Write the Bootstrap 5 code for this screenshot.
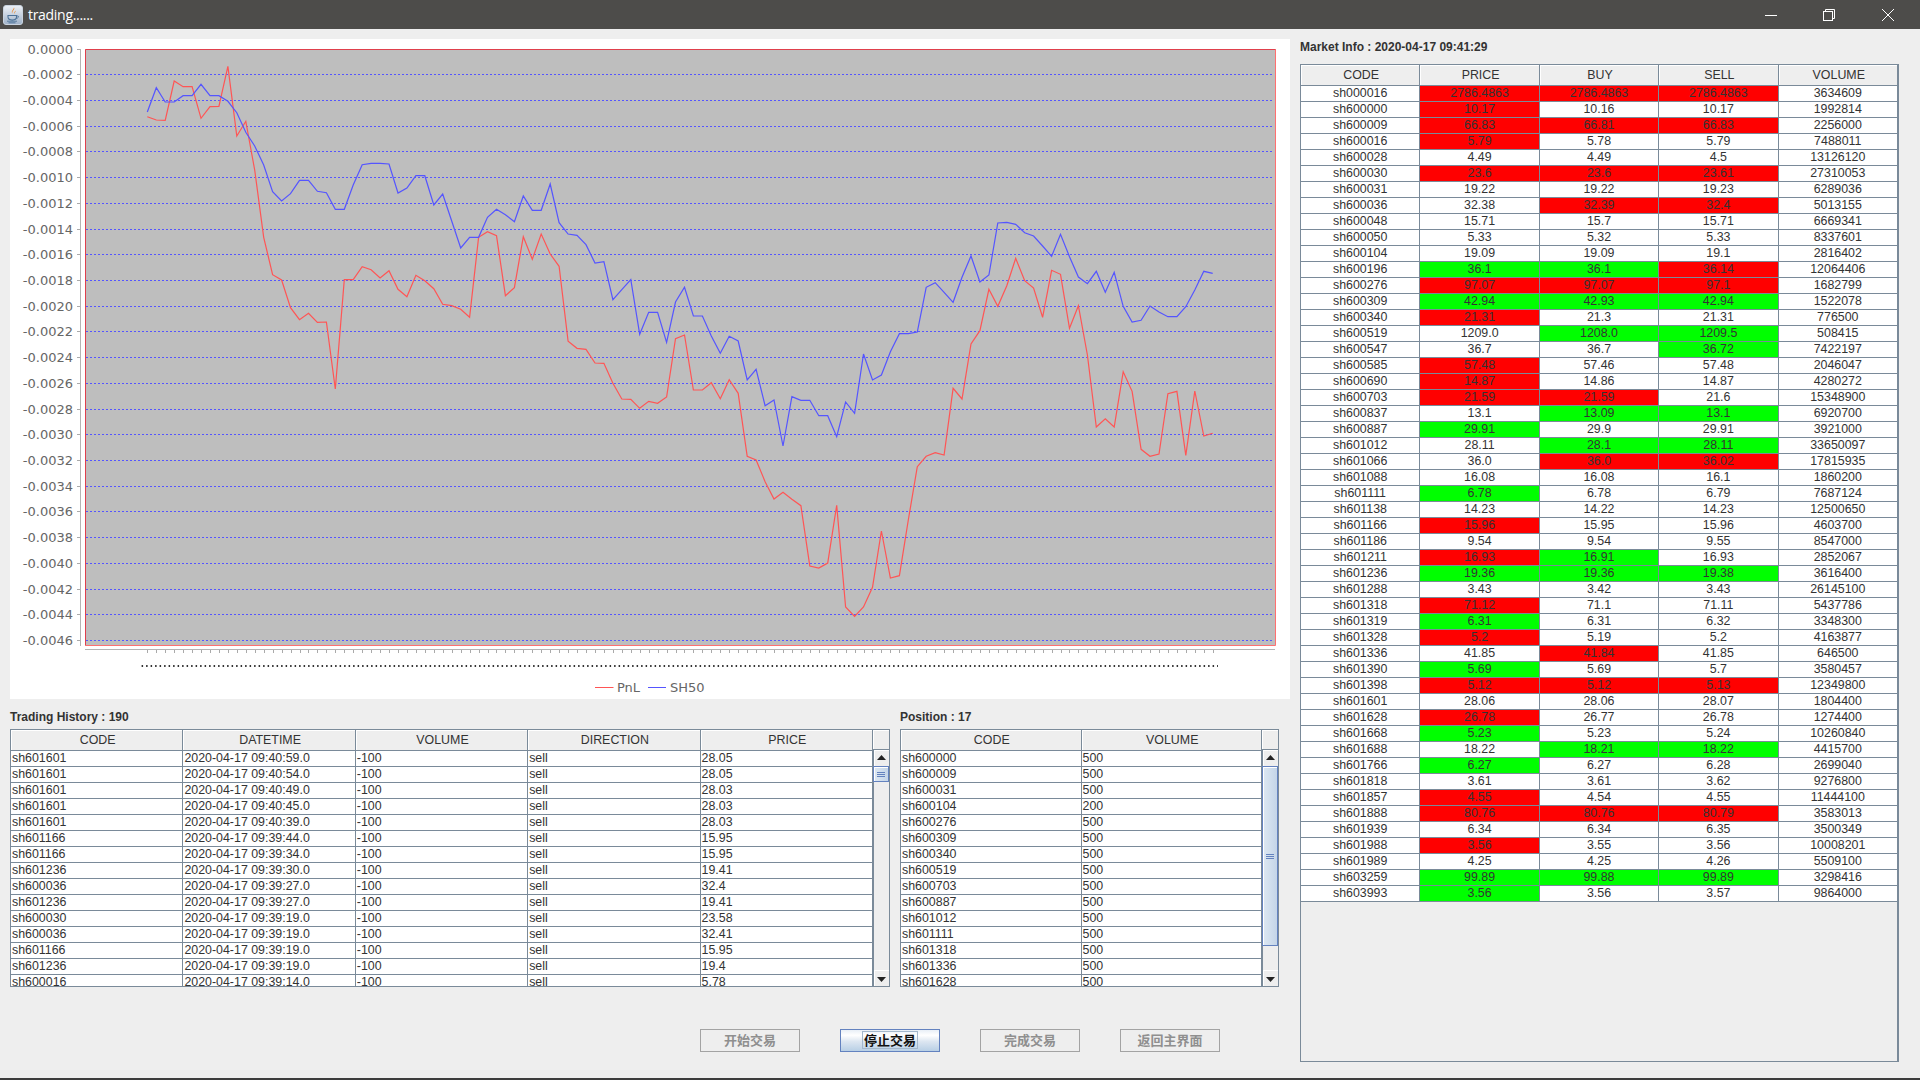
<!DOCTYPE html>
<html lang="zh">
<head>
  <meta charset="UTF-8">
  <title>trading......</title>
  <link href="https://cdn.jsdelivr.net/npm/bootstrap@5.3.3/dist/css/bootstrap.min.css" rel="stylesheet">
  <style>
    body { background: #eeeeee; overflow: hidden; font-family: "Liberation Sans", Arial, sans-serif; color: #333333; }
    .app-window { width: 1920px; height: 1080px; border-bottom: 2px solid #3c3c3c; }
    .title-strip { height: 29px; background: #4d4c4a; color: #fff; font-family: "Open Sans", "Noto Sans", sans-serif; font-size: 14px; letter-spacing: -.3px; }
    .title-icon { margin-left: 3px; margin-right: 5px; }
    .win-btn { width: 58.5px; height: 29px; }
    .win-btns { margin-right: 3px; }

    .left-side { width: 1280px; margin-left: 10px; }
    .chart-panel { height: 660px; margin-top: 10px; background: #fff; }
    .chart-panel svg { display: block; }
    .chart-panel text { font-family: "DejaVu Sans", sans-serif; font-size: 13px; fill: #666; }

    .pane-label { height: 20px; line-height: 20px; font-size: 12px; font-weight: bold; color: #333; }
    .label-row { margin-top: 8px; margin-bottom: 2px; }
    .history-label { width: 890px; flex-shrink: 0; }
    .market-label { margin-top: 8px; height: 27px; line-height: 20px; }

    .grid-pane { border: 1px solid #7a8a99; height: 258px; overflow: hidden; background: #eee; }
    .history-pane { width: 880px; margin-right: 10px; }
    .position-pane { width: 379px; }
    .market-pane { width: 599px; height: 998px; border-right-width: 2px; }

    .swing-grid { table-layout: fixed; border-collapse: separate; border-spacing: 0; margin: 0; font-size: 12.4px; width: auto; }
    .swing-grid th, .swing-grid td { padding: 0; overflow: hidden; white-space: nowrap; color: #333; border-style: solid; border-color: #7a8a99; border-width: 0 1px 1px 0; }
    .swing-grid th { height: 20px; line-height: 19px; padding: 1px 0 0 2px; background: #eeeeee; font-weight: normal; text-align: center; box-shadow: inset 1px 1px 0 #fff; }
    .swing-grid td { height: 16px; line-height: 15px; padding-left: 1px; background: #fff; }
    .market-grid td { text-align: center; padding-left: 0; }
    .swing-grid td.up-cell { background: #ff0000; }
    .swing-grid td.down-cell { background: #00ff00; }
    .history-grid { width: 862px; }
    .history-grid col { width: 172.4px; }
    .position-grid { width: 361px; }
    .position-grid col { width: 180.5px; }
    .market-grid { width: 597px; }
    .market-grid col { width: 119.4px; }

    .fake-scroll { width: 16px; height: 256px; background: #eee; }
    .scroll-head { height: 20px; border-bottom: 1px solid #7a8a99; box-shadow: inset 1px 1px 0 #fff; }
    .scroll-arrow { height: 16px; background: #eee; box-shadow: inset 1px 1px 0 #fff; border-left: 1px solid #7a8a99; }
    .arrow-up { padding-bottom: 1px; }
    .arrow-down { padding-top: 3px; }
    .scroll-rest { border-left: 1px solid #7a8a99; }
    .scroll-thumb { background: linear-gradient(90deg, #dde8f3, #c4d5e8); border: 1px solid #6382bf; box-shadow: inset 1px 1px 0 #fff; }
    .thumb-small { height: 16px; }
    .thumb-big { height: 180px; }
    .grip { width: 8px; height: 5px; border-top: 1px solid #6382bf; border-bottom: 1px solid #6382bf; background: linear-gradient(#6382bf, #6382bf) center / 100% 1px no-repeat; }

    .action-row { margin-top: 42px; margin-left: 690px; gap: 40px; }
    .action-btn {
      width: 100px; height: 23px; padding: 0 0 2px; border-radius: 0; font-family: "Noto Sans CJK SC", sans-serif; font-size: 13px; font-weight: bold; line-height: 1;
      --bs-btn-disabled-color: #8f8f8f; --bs-btn-disabled-bg: #eeeeee; --bs-btn-disabled-border-color: #a3a3a3; --bs-btn-disabled-opacity: 1;
    }
    .action-btn.live-btn { color: #111; border: 1px solid #6382bf; background: linear-gradient(#e8eff7 0%, #ffffff 25%, #dce6f1 55%, #b8cfe5 100%); }
    .focus-box { display: inline-block; padding: 1px 1px; border: 1px solid #a3b8cc; line-height: 14px; }

    .right-side { width: 599px; margin-left: 10px; }
  </style>
</head>
<body>
  <div class="app-window d-flex flex-column">

    <!-- title bar -->
    <div class="title-strip d-flex align-items-center">
      <svg class="title-icon" width="20" height="20" viewBox="0 0 20 20">
        <defs><linearGradient id="ic" x1="0" y1="0" x2="0" y2="1"><stop offset="0" stop-color="#eef2f7"/><stop offset="1" stop-color="#9fb2c9"/></linearGradient></defs>
        <rect x="0.5" y="0.5" width="19" height="19" rx="2.5" fill="url(#ic)" stroke="#c9d3df"/>
        <path d="M11 2.5c1.5 2-2.5 3.5-1.5 6 -2-2 .8-3.5 1.5-6zM12.6 5.5c.5 1.4-1.5 2-.9 3.4 -1.4-1.2.3-2.2.9-3.4z" fill="#e8872c"/>
        <path d="M5 10.5h8.5v1.6c0 2-1.6 3-4.2 3s-4.3-1-4.3-3z" fill="none" stroke="#4d7398" stroke-width="1.1"/>
        <path d="M13.5 11h1.4c1 0 1 2-1.6 2.4" fill="none" stroke="#4d7398" stroke-width=".9"/>
        <path d="M4 16.2h10M5.5 17.8h7" stroke="#4d7398" stroke-width=".9"/>
      </svg>
      <span>trading......</span>
      <div class="win-btns d-flex ms-auto">
        <div class="win-btn d-flex align-items-center justify-content-center">
          <svg width="12" height="12" viewBox="0 0 12 12"><path d="M0 6.5h12" stroke="#fff"/></svg>
        </div>
        <div class="win-btn d-flex align-items-center justify-content-center">
          <svg width="12" height="12" viewBox="0 0 12 12" fill="none" stroke="#fff"><rect x=".5" y="2.5" width="9" height="9"/><path d="M2.5 2.5v-2h9v9h-2"/></svg>
        </div>
        <div class="win-btn d-flex align-items-center justify-content-center">
          <svg width="12" height="12" viewBox="0 0 12 12"><path d="M0 0l12 12M12 0L0 12" stroke="#fff"/></svg>
        </div>
      </div>
    </div>

    <div class="d-flex flex-grow-1">
      <div class="left-side">
        <!-- pnl chart -->
        <div class="chart-panel">
          <svg id="chart" width="1280" height="660" viewBox="10 39 1280 660"></svg>
        </div>

        <div class="label-row d-flex">
          <div class="pane-label history-label">Trading History : 190</div>
          <div class="pane-label">Position : 17</div>
        </div>

        <div class="d-flex">
          <div class="grid-pane history-pane d-flex">
            <div class="flex-grow-1 overflow-hidden">
              <table class="table swing-grid history-grid">
                <colgroup><col><col><col><col><col></colgroup>
                <thead><tr><th>CODE</th><th>DATETIME</th><th>VOLUME</th><th>DIRECTION</th><th>PRICE</th></tr></thead>
                <tbody id="history-rows"></tbody>
              </table>
            </div>
            <div class="fake-scroll d-flex flex-column flex-shrink-0">
              <div class="scroll-head"></div>
              <div class="scroll-arrow arrow-up d-flex align-items-center justify-content-center"><svg width="9" height="5"><path d="M4.5 0L9 5H0z" fill="#222"/></svg></div>
              <div class="scroll-thumb thumb-small d-flex align-items-center justify-content-center"><div class="grip"></div></div>
              <div class="scroll-rest flex-grow-1"></div>
              <div class="scroll-arrow arrow-down d-flex align-items-center justify-content-center"><svg width="9" height="5"><path d="M4.5 5L9 0H0z" fill="#222"/></svg></div>
            </div>
          </div>

          <div class="grid-pane position-pane d-flex">
            <div class="flex-grow-1 overflow-hidden">
              <table class="table swing-grid position-grid">
                <colgroup><col><col></colgroup>
                <thead><tr><th>CODE</th><th>VOLUME</th></tr></thead>
                <tbody id="position-rows"></tbody>
              </table>
            </div>
            <div class="fake-scroll d-flex flex-column flex-shrink-0">
              <div class="scroll-head"></div>
              <div class="scroll-arrow arrow-up d-flex align-items-center justify-content-center"><svg width="9" height="5"><path d="M4.5 0L9 5H0z" fill="#222"/></svg></div>
              <div class="scroll-thumb thumb-big d-flex align-items-center justify-content-center"><div class="grip"></div></div>
              <div class="scroll-rest flex-grow-1"></div>
              <div class="scroll-arrow arrow-down d-flex align-items-center justify-content-center"><svg width="9" height="5"><path d="M4.5 5L9 0H0z" fill="#222"/></svg></div>
            </div>
          </div>
        </div>

        <div class="action-row d-flex">
          <button class="btn action-btn" disabled>开始交易</button>
          <button class="btn action-btn live-btn"><span class="focus-box">停止交易</span></button>
          <button class="btn action-btn" disabled>完成交易</button>
          <button class="btn action-btn" disabled>返回主界面</button>
        </div>
      </div>

      <div class="right-side">
        <div class="pane-label market-label">Market Info : 2020-04-17 09:41:29</div>
        <div class="grid-pane market-pane">
          <table class="table swing-grid market-grid">
            <colgroup><col><col><col><col><col></colgroup>
            <thead><tr><th>CODE</th><th>PRICE</th><th>BUY</th><th>SELL</th><th>VOLUME</th></tr></thead>
            <tbody id="market-rows"></tbody>
          </table>
        </div>
      </div>
    </div>
  </div>

  <script src="https://cdn.jsdelivr.net/npm/bootstrap@5.3.3/dist/js/bootstrap.bundle.min.js"></script>
  <script>
    // code, price, buy, sell, volume, colour flags for price/buy/sell
    const market = [
      ["sh000016","2786.4863","2786.4863","2786.4863","3634609","rrr"],
      ["sh600000","10.17","10.16","10.17","1992814","r--"],
      ["sh600009","66.83","66.81","66.83","2256000","rrr"],
      ["sh600016","5.79","5.78","5.79","7488011","r--"],
      ["sh600028","4.49","4.49","4.5","13126120","---"],
      ["sh600030","23.6","23.6","23.61","27310053","rrr"],
      ["sh600031","19.22","19.22","19.23","6289036","---"],
      ["sh600036","32.38","32.39","32.4","5013155","-rr"],
      ["sh600048","15.71","15.7","15.71","6669341","---"],
      ["sh600050","5.33","5.32","5.33","8337601","---"],
      ["sh600104","19.09","19.09","19.1","2816402","---"],
      ["sh600196","36.1","36.1","36.14","12064406","ggr"],
      ["sh600276","97.07","97.07","97.1","1682799","rrr"],
      ["sh600309","42.94","42.93","42.94","1522078","ggg"],
      ["sh600340","21.31","21.3","21.31","776500","r--"],
      ["sh600519","1209.0","1208.0","1209.5","508415","-gg"],
      ["sh600547","36.7","36.7","36.72","7422197","--g"],
      ["sh600585","57.48","57.46","57.48","2046047","r--"],
      ["sh600690","14.87","14.86","14.87","4280272","r--"],
      ["sh600703","21.59","21.59","21.6","15348900","rr-"],
      ["sh600837","13.1","13.09","13.1","6920700","-gg"],
      ["sh600887","29.91","29.9","29.91","3921000","g--"],
      ["sh601012","28.11","28.1","28.11","33650097","-gg"],
      ["sh601066","36.0","36.0","36.02","17815935","-rr"],
      ["sh601088","16.08","16.08","16.1","1860200","---"],
      ["sh601111","6.78","6.78","6.79","7687124","g--"],
      ["sh601138","14.23","14.22","14.23","12500650","---"],
      ["sh601166","15.96","15.95","15.96","4603700","r--"],
      ["sh601186","9.54","9.54","9.55","8547000","---"],
      ["sh601211","16.93","16.91","16.93","2852067","rg-"],
      ["sh601236","19.36","19.36","19.38","3616400","ggg"],
      ["sh601288","3.43","3.42","3.43","26145100","---"],
      ["sh601318","71.12","71.1","71.11","5437786","r--"],
      ["sh601319","6.31","6.31","6.32","3348300","g--"],
      ["sh601328","5.2","5.19","5.2","4163877","r--"],
      ["sh601336","41.85","41.84","41.85","646500","-r-"],
      ["sh601390","5.69","5.69","5.7","3580457","g--"],
      ["sh601398","5.12","5.12","5.13","12349800","rrr"],
      ["sh601601","28.06","28.06","28.07","1804400","---"],
      ["sh601628","26.78","26.77","26.78","1274400","r--"],
      ["sh601668","5.23","5.23","5.24","10260840","g--"],
      ["sh601688","18.22","18.21","18.22","4415700","-gg"],
      ["sh601766","6.27","6.27","6.28","2699040","g--"],
      ["sh601818","3.61","3.61","3.62","9276800","---"],
      ["sh601857","4.55","4.54","4.55","11444100","r--"],
      ["sh601888","80.76","80.76","80.79","3583013","rrr"],
      ["sh601939","6.34","6.34","6.35","3500349","---"],
      ["sh601988","3.56","3.55","3.56","10008201","r--"],
      ["sh601989","4.25","4.25","4.26","5509100","---"],
      ["sh603259","99.89","99.88","99.89","3298416","ggg"],
      ["sh603993","3.56","3.56","3.57","9864000","g--"]
    ];
    const flagClass = { r: "up-cell", g: "down-cell", "-": "" };
    document.getElementById("market-rows").innerHTML = market.map(m => `
      <tr><td>${m[0]}</td>
        <td class="${flagClass[m[5][0]]}">${m[1]}</td>
        <td class="${flagClass[m[5][1]]}">${m[2]}</td>
        <td class="${flagClass[m[5][2]]}">${m[3]}</td>
        <td>${m[4]}</td></tr>`).join("");

    const trades = [
      ["sh601601","09:40:59.0","28.05"],["sh601601","09:40:54.0","28.05"],["sh601601","09:40:49.0","28.03"],
      ["sh601601","09:40:45.0","28.03"],["sh601601","09:40:39.0","28.03"],["sh601166","09:39:44.0","15.95"],
      ["sh601166","09:39:34.0","15.95"],["sh601236","09:39:30.0","19.41"],["sh600036","09:39:27.0","32.4"],
      ["sh601236","09:39:27.0","19.41"],["sh600030","09:39:19.0","23.58"],["sh600036","09:39:19.0","32.41"],
      ["sh601166","09:39:19.0","15.95"],["sh601236","09:39:19.0","19.4"],["sh600016","09:39:14.0","5.78"]
    ];
    document.getElementById("history-rows").innerHTML = trades.map(h =>
      `<tr><td>${h[0]}</td><td>2020-04-17 ${h[1]}</td><td>-100</td><td>sell</td><td>${h[2]}</td></tr>`).join("");

    const position = [
      ["sh600000",500],["sh600009",500],["sh600031",500],["sh600104",200],["sh600276",500],
      ["sh600309",500],["sh600340",500],["sh600519",500],["sh600703",500],["sh600887",500],
      ["sh601012",500],["sh601111",500],["sh601318",500],["sh601336",500],["sh601628",500]
    ];
    document.getElementById("position-rows").innerHTML = position.map(p =>
      `<tr><td>${p[0]}</td><td>${p[1]}</td></tr>`).join("");

    // chart: values are screen y read off the plot, one point per tick
    const sh50 = [112,87.7,102,102,95.7,95.7,84.3,95.7,95.7,101.3,112.7,132.3,146,165,191.7,201,193.7,180.3,180.3,191.3,
      192.7,209.3,209.3,185,164.7,163.3,163.3,164,193,188,175.7,175.7,205,194,221,248,237.3,237.3,217.3,209.3,
      214.7,221.7,196,210.3,210.3,184,222.7,234,235.3,244.7,263,261.7,299.7,289.7,279.7,334.3,312.3,312.3,342.3,302,
      287.3,316,316,336,353.3,336.3,341,380,369.3,405.7,400,446,396.7,400.3,400.3,415.7,415.7,436.7,402,413.3,
      354,380,375,351.7,333.7,333.7,332,287.3,282.7,292.3,302.3,277.3,256,282,275,223,222.3,224.3,232.7,236,
      246,256.3,234.3,256.7,277,283.7,271.3,292.3,272.3,306.3,322,320.3,306,312,316.7,316.7,306.7,290,271.3,273.3];
    const pnl = [116.7,120,120.3,81,86.7,86.7,118.3,106.7,106.3,66.3,136,121.3,170,237.3,274.7,280,307.7,319.7,313.3,322.3,
      322,389,279.7,279.7,266.7,269.7,278,270.7,289.3,296.7,275.3,280.7,288.7,304.3,305.7,309.3,317.3,237.3,231.7,235.7,
      295.7,287.7,236.7,259.3,234,254,266.3,341.3,348.3,349.3,363,363.3,383.3,399,399.3,408.3,401.3,403.3,397,338.7,
      335,390,390,382.7,398.7,379.7,393.3,456.3,460,481.7,499,492.3,499.3,505.7,566,568,563,505.3,607,616.3,
      607,587.3,531,578,575.7,520,466.7,456.3,452.7,455,388.3,399,344,330.7,289.3,306.3,285.7,258.3,280.7,288,
      317.3,270.3,274.3,328.3,305.7,355,427,418.7,427,371.7,391.3,449.3,456.3,454,393.7,391.3,455.3,391,436,433.3];

    const stepX = 8.953, firstX = 147.3, plotTop = 48.5, stepY = 25.72;
    let s = `<rect x="85.5" y="49.5" width="1190" height="596" fill="#bebebe"/>`;
    for (let i = 0; i <= 23; i++) {
      const y = Math.round(plotTop + i * stepY) + 0.5;
      const label = i === 0 ? "0.0000" : "-" + (i * 0.0002).toFixed(4);
      if (i > 0) s += `<path d="M86 ${y}H1274" stroke="#5555ff" stroke-dasharray="2 2"/>`;
      s += `<path d="M77 ${y}H80" stroke="#aaa"/>`;
      s += `<text x="73" y="${y + 4.5}" text-anchor="end">${label}</text>`;
    }
    s += `<path d="M85.5 49.5H1275.5V645.5H85.5" fill="none" stroke="#ff7070"/>`;
    s += `<path d="M85.5 645.5V49.5H1275.5" fill="none" stroke="#e0404c"/>`;
    s += `<path d="M80.5 49V646M85 649.5H1275" stroke="#b4b4b4"/>`;
    for (let i = 0; i < 120; i++) {
      const x = Math.round(firstX + i * stepX) + 0.5;
      s += `<path d="M${x} 650V653" stroke="#aaa"/>`;
    }
    s += `<path d="M141.6 666H1218" stroke="#333" stroke-width="2" stroke-dasharray="1.5 3"/>`;
    const line = (ys, c) => `<polyline fill="none" stroke="${c}" stroke-width="1.2" points="${ys.map((y, i) => (firstX + i * stepX).toFixed(1) + "," + y).join(" ")}"/>`;
    s += line(pnl, "#ff5555") + line(sh50, "#5555ff");
    s += `<path d="M595 687.5H613.5" stroke="#ff5555"/><text x="617" y="692">PnL</text>`;
    s += `<path d="M648 687.5H666" stroke="#5555ff"/><text x="670" y="692">SH50</text>`;
    document.getElementById("chart").innerHTML = s;
  </script>
</body>
</html>
